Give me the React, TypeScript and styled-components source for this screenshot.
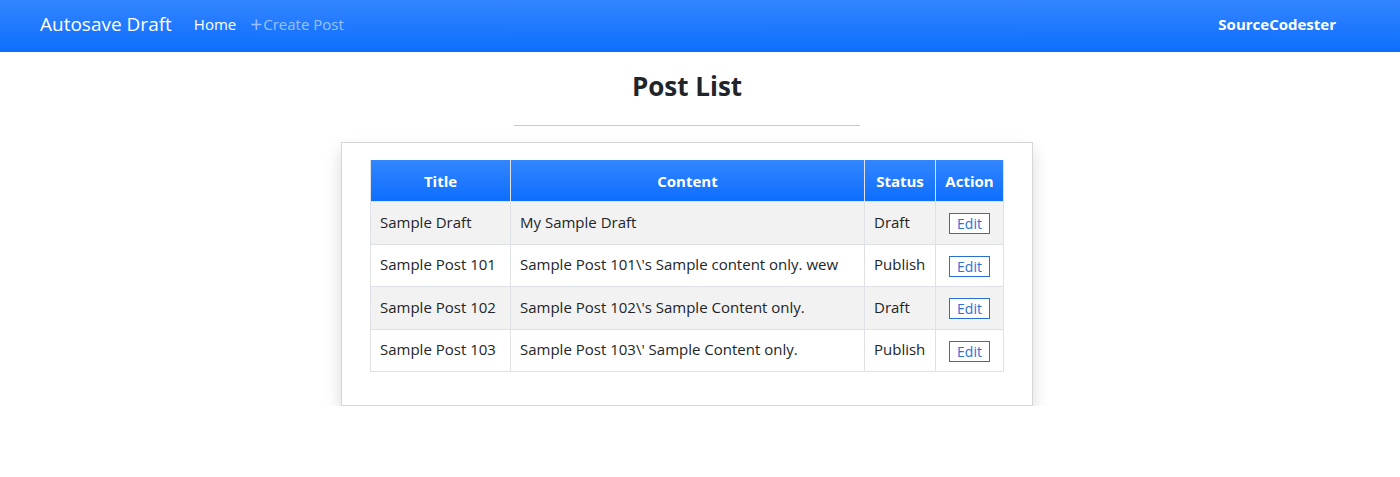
import React from "react";
import styled, { createGlobalStyle } from "styled-components";

const GlobalStyle = createGlobalStyle`
  body {
    margin: 0;
    background: #fff;
    font-family: "Open Sans", "Noto Sans", sans-serif;
    color: #212529;
  }
`;

const NavbarUI = styled.nav`
  display: flex;
  align-items: center;
  height: 52px;
  padding: 0 64px 4px 40px;
  box-sizing: border-box;
  background: linear-gradient(180deg, #3385ff 0%, #0d6efd 100%);
`;

const BrandUI = styled.span`
  font-size: 19px;
  color: #fff;
  margin-right: 22px;
`;

const NavLinkUI = styled.a<{ $muted?: boolean }>`
  display: flex;
  align-items: center;
  font-size: 15px;
  color: ${({ $muted }) => ($muted ? "rgba(255,255,255,0.55)" : "#fff")};
  margin-right: 14px;
  text-decoration: none;
`;

const PlusUI = styled.span`
  font-size: 21px;
  line-height: 1;
  margin-right: 1px;
`;

const SpacerUI = styled.div`
  flex: 1;
`;

const SiteUI = styled.span`
  font-size: 15px;
  font-weight: 700;
  color: #fff;
`;

const MainUI = styled.main`
  display: flex;
  flex-direction: column;
  align-items: center;
  padding-right: 26px;
`;

const HeadingUI = styled.h1`
  margin: 17px 0 0;
  font-size: 26px;
  font-weight: 700;
  line-height: 34px;
`;

const RuleUI = styled.hr`
  width: 346px;
  margin: 22px 0 16px;
  border: 0;
  border-top: 1px solid #c8c8c8;
`;

const CardUI = styled.div`
  width: 634px;
  padding: 17px 28px 33px;
  border: 1px solid #d6d6d6;
  box-shadow: 0 8px 16px rgba(0, 0, 0, 0.15);
  background: #fff;
`;

const TableUI = styled.table`
  width: 634px;
  border-collapse: collapse;
  table-layout: fixed;
  font-size: 15px;
`;

const HeadCellUI = styled.th<{ $width?: number }>`
  width: ${({ $width }) => ($width ? `${$width}px` : "auto")};
  height: 41px;
  padding: 0;
  background: linear-gradient(180deg, #3385ff 0%, #0d6efd 100%);
  color: #fff;
  font-weight: 700;
  text-align: center;
  border: 1px solid #dee2e6;
  border-top: 0;
`;

const RowUI = styled.tr<{ $striped: boolean }>`
  background: ${({ $striped }) => ($striped ? "#f2f2f2" : "#fff")};
`;

const CellUI = styled.td<{ $center?: boolean }>`
  height: 39.5px;
  padding: 0 9px 2px;
  border: 1px solid #dee2e6;
  vertical-align: middle;
  text-align: ${({ $center }) => ($center ? "center" : "left")};
  white-space: nowrap;
  overflow: hidden;
`;

const EditUI = styled.button`
  font-family: inherit;
  font-size: 14px;
  line-height: 17px;
  padding: 1px 7px;
  vertical-align: -4px;
  color: #2f6fd8;
  background: #fff;
  border: 1px solid #2a6fd6;
  border-radius: 0;
`;

const posts = [
  { title: "Sample Draft", content: "My Sample Draft", status: "Draft" },
  { title: "Sample Post 101", content: "Sample Post 101\\'s Sample content only. wew", status: "Publish" },
  { title: "Sample Post 102", content: "Sample Post 102\\'s Sample Content only.", status: "Draft" },
  { title: "Sample Post 103", content: "Sample Post 103\\' Sample Content only.", status: "Publish" },
];

function App(): JSX.Element {
  return (
    <>
      <GlobalStyle />
      <NavbarUI>
        <BrandUI>Autosave Draft</BrandUI>
        <NavLinkUI>Home</NavLinkUI>
        <NavLinkUI $muted>
          <PlusUI>+</PlusUI>Create Post
        </NavLinkUI>
        <SpacerUI />
        <SiteUI>SourceCodester</SiteUI>
      </NavbarUI>
      <MainUI>
        <HeadingUI>Post List</HeadingUI>
        <RuleUI />
        <CardUI>
          <TableUI>
            <thead>
              <tr>
                <HeadCellUI $width={139}>Title</HeadCellUI>
                <HeadCellUI $width={353}>Content</HeadCellUI>
                <HeadCellUI $width={70}>Status</HeadCellUI>
                <HeadCellUI>Action</HeadCellUI>
              </tr>
            </thead>
            <tbody>
              {posts.map((post, i) => (
                <RowUI key={post.title} $striped={i % 2 === 0}>
                  <CellUI>{post.title}</CellUI>
                  <CellUI>{post.content}</CellUI>
                  <CellUI>{post.status}</CellUI>
                  <CellUI $center>
                    <EditUI>Edit</EditUI>
                  </CellUI>
                </RowUI>
              ))}
            </tbody>
          </TableUI>
        </CardUI>
      </MainUI>
    </>
  );
}

export default App;
